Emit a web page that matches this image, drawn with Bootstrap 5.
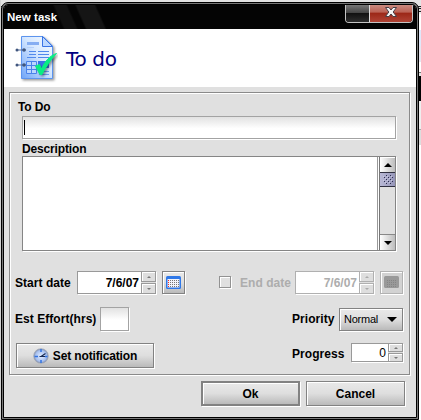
<!DOCTYPE html>
<html lang="en">
<head>
<meta charset="utf-8">
<meta name="viewport" content="width=device-width, initial-scale=1">
<title>New task</title>
<link href="https://cdn.jsdelivr.net/npm/bootstrap@5.3.0/dist/css/bootstrap.min.css" rel="stylesheet">
<style>
html,body{height:420px;overflow:hidden}
body{background:linear-gradient(90deg,#d2d2d2 0 1px,transparent 1px),linear-gradient(#e4e4e4 0 6px,#222 6px 7px,#ddd 7px 8px,#222 8px 9px,#ddd 9px 11px,#222 11px 12px,#eee 12px 14px,#fff 14px 30px,#dfe8fa 30px 46px,#e6e6f0 46px 62px,#fff 62px 72px,#777 72px 73px,#e4e4e4 73px 76px,#000 76px 101px,#eee 101px 129px,#aaa 129px 130px,#ddd 130px 145px,#fff 145px);font:bold 12px/14px "Liberation Sans",Arial,sans-serif;letter-spacing:-.15px;color:#000;padding:2px 2px 0 1px}
.win{height:418px;border:1px solid #000;border-radius:7px 7px 0 0;background:#777;padding:1px}
.win-in{height:414px;border:1px solid #000;border-radius:5px 5px 0 0;background:#e0e0e0;overflow:hidden}
.titlebar{height:24px;background:linear-gradient(66deg,transparent 0 54px,#111 56px 66px,transparent 68px 74px,#151515 76px 92px,transparent 94px) 0 0/100% 100%,#040404;color:#fff;padding-left:3px;padding-top:5px;font-size:11.5px;letter-spacing:.05px}
.caps{width:68px;height:20px;margin:-7px 3px 0 0;border:1px solid #c4c4c4;border-top:0;border-radius:0 0 4px 4px;overflow:hidden;padding-top:2px}
.caps-a{width:24px;background:linear-gradient(#777,#464646 45%,#111 50%,#2d2d2d);border-right:1px solid #ddd}
.caps-b{background:linear-gradient(#cb8b80,#bb6154 42%,#9c2717 48%,#b04335)}
.head{height:58px;background:#fff;padding:6px 0 0 9px}
.head h1{font:20px/24px "DejaVu Sans",sans-serif;color:#000080;letter-spacing:-.35px;margin:12px 0 0 8px}
.group{margin:5px 6px 0 5px;height:283px;border:1px solid #8a8a8a;box-shadow:inset 1px 1px #fff,1px 1px #fff;padding:7px 0 0 5px}
.fld{background:#fff;border:1px solid #a3a3a3;box-shadow:1px 1px #fff}
.soft{background:linear-gradient(#e2e2e2,#fff 55%)}
.lbl{height:14px;white-space:nowrap}
.frow .lbl{letter-spacing:.05px}
.l-todo{padding-left:3px}
.l-desc{padding-left:7px;margin-top:3px}
.todo{height:23px;margin:2px 0 0 7px;width:374px;padding:3px 0 0 1px}
.caret{width:1px;height:15px;background:#000}
.desc{height:95px;width:374px;margin-left:7px;border:1px solid #858585;box-shadow:1px 1px #fff;}
.sb{width:16px;border-left:1px solid #777;box-shadow:-1px 0 #fff,-2px 0 #999;background:#e0e0e0}
.sbb{height:15px;background:linear-gradient(90deg,#fff,#bdbdbd);border-top:1px solid #fff}
.sbb.dn{height:16px;border-top-color:#888}
.thumb{height:15px;border:1px solid #303040;border-width:1px 0;background:linear-gradient(90deg,#b9b9d6,#9595b8)}
.frow{width:388px}
.r1{margin-top:20px;height:23px}
.r2{margin-top:13px;height:24px}
.r3{margin-top:12px;height:25px}
.w-start{width:62px}
.w-end{width:55px}
.w-est{width:85px}
.spin{height:23px;width:79px;box-shadow:1px 1px #fff}
.spin .val{border:1px solid #999;border-right:0;background:#fff;text-align:right;flex:1;padding:4px 2px 0 0;letter-spacing:0}
.arrows{width:15px;display:grid;grid-template-rows:1fr 1fr;gap:1px}
.arrows span{border:1px solid #999;box-shadow:inset 1px 1px #fff;background:#dedede;display:flex;align-items:center;justify-content:center}
.arrows path{fill:#777}
.dis{color:#adadad}
.dis .val,.dis .arrows span{border-color:#b0b0b0}
.dis .arrows path{fill:#aaa}
.jbtn{border:1px solid #828282;box-shadow:inset 1px 1px #fff,1px 1px #fff;background:linear-gradient(#e9e9e9,#dedede 50%,#bababa);border-radius:0;padding:0;color:#000;font:inherit;letter-spacing:inherit;display:flex;align-items:center;justify-content:center}
.jbtn:disabled{opacity:1}
.sq{width:23px;height:23px;margin-left:6px}
.sq.off{border-color:#b2b2b2;background:#d2d2d2}
.chk{width:12px;height:12px;border:1px solid #929292;box-shadow:1px 1px #fff,inset 1px 1px #fff;margin:0 9px 0 34px;position:relative;top:-1px}
.est{width:29px;height:24px}
.combo{width:64px;height:23px;font-weight:normal;font-size:11px;letter-spacing:-.25px;justify-content:space-between;padding:0 5px 0 4px}
.notif{width:138px;height:25px;margin-left:1px}
.spin.prog{width:52px;height:19px;margin-left:2px}
.prog .val{font-weight:normal;padding:2px 2px 0 0}
.w-prog{width:57px}
.w-prio{width:47px}
.acts{margin:6px 11px 0 0;gap:6px}
.act{width:99px;height:25px;letter-spacing:0}
.okb{border-width:2px}
svg{display:block}
</style>
</head>
<body>
<main class="win"><div class="win-in">
  <header class="titlebar d-flex justify-content-between"><span>New task</span>
    <div class="caps d-flex"><span class="caps-a"></span><span class="caps-b flex-fill d-flex justify-content-center">
      <svg width="14" height="16" viewBox="0 0 14 16"><path d="M1.500 2.500h3.500L7 5l2-2.500h3.500L9.200 7l3.300 4.500H9L7 9l-2 2.500H1.500L4.800 7z" fill="#f5f5f5" stroke="#493d43"/></svg></span></div>
  </header>
  <section class="head d-flex">
    <svg width="45" height="48" viewBox="0 0 45 48">
      <defs><linearGradient id="pg" x1="1" y1="0" x2="0" y2="1"><stop stop-color="#f8fcff"/><stop offset=".45" stop-color="#d6e8ff"/><stop offset="1" stop-color="#6ea4f8"/></linearGradient>
      <filter id="sh" x="-20%" y="-20%" width="150%" height="150%" color-interpolation-filters="sRGB"><feDropShadow dx="1.5" dy="1.5" stdDeviation="1" flood-opacity=".4"/></filter></defs>
      <path d="M8.500 1.500H30L39.500 11V43.500H8.500z" fill="url(#pg)" stroke="#5c94ee" filter="url(#sh)"/>
      <path d="M29.500 1.500V11.500H39.500z" fill="#bcd8ff" stroke="#3974e5"/>
      <path d="M14 8.500h12" stroke="#86aef2" stroke-width="3"/><path d="M14 12.500h7" stroke="#b5d0fa"/>
      <path d="M16 16.500h7M16 19.500h7M14 22.500h9M25 16.500h11M25 19.500h11M25 22.500h11" stroke="#5189ec"/>
      <path d="M13.500 26.500h10v12h-10zM13.500 30.500h10M13.500 34.500h10M18.500 26.500v12" fill="#bad6ff" stroke="#4a82ea"/>
      <path d="M25 26h11v7H25z" fill="#3974e5"/><path d="M26 36.500h10M26 39.500h10" stroke="#6a9af0"/>
      <path d="M3 15H13M3 30H13" stroke="#566e9a"/><g fill="#40567e"><circle cx="4" cy="15" r="1.500"/><circle cx="11" cy="15" r="1.800"/><circle cx="4" cy="30" r="1.500"/><circle cx="11" cy="30" r="1.800"/></g>
      <path d="M22.500 31l4-1.500 2 4.500C32 26 37 20.500 43.500 18.500 37.500 25 33 31.500 29 39.500h-2z" fill="#09ed83" stroke="#09ed83" stroke-width="1" filter="url(#sh)"/>
    </svg>
    <h1>To do</h1>
  </section>
  <section class="group">
    <div class="lbl l-todo">To Do</div>
    <div class="fld soft todo"><div class="caret"></div></div>
    <div class="lbl l-desc">Description</div>
    <div class="desc bg-white d-flex justify-content-end">
      <div class="sb d-flex flex-column">
        <div class="sbb d-flex align-items-center justify-content-center"><svg width="8" height="4"><path d="M0 4l4-4 4 4z"/></svg></div>
        <div class="thumb"><svg width="15" height="13"><defs><pattern id="dots" width="4" height="4" patternUnits="userSpaceOnUse"><path d="M0 0h1v1H0zM2 2h1v1H2z" fill="#2d2d50"/><path d="M1 1h1v1H1zM3 3h1v1H3z" fill="#c8c8e0"/></pattern></defs><path d="M3 2h10v9H3z" fill="url(#dots)"/></svg></div><div class="flex-fill"></div>
        <div class="sbb dn d-flex align-items-center justify-content-center"><svg width="8" height="4"><path d="M0 0h8L4 4z"/></svg></div>
      </div>
    </div>
    <div class="frow r1 d-flex align-items-center">
      <span class="lbl w-start">Start date</span>
      <div class="spin d-flex"><div class="val">7/6/07</div><div class="arrows"><span><svg width="4" height="2"><path d="M0 2l2-2 2 2z"/></svg></span><span><svg width="4" height="2"><path d="M0 0h4L2 2z"/></svg></span></div></div>
      <button class="jbtn sq" aria-label="Pick start date"><svg width="15" height="13" viewBox="0 0 15 13"><rect width="15" height="13" rx="1.500" fill="#2f78e8"/><path d="M1.500 3h12v8.500h-12z" fill="#f2f4fa"/><path d="M2.500 4v7" stroke="#f02c2c" stroke-dasharray="1 1"/><path d="M4.500 4v7M6.500 4v7M8.500 4v7M10.500 4v7M12.500 4v7" stroke="#777" stroke-dasharray="1 1"/></svg></button>
      <span class="chk"></span><span class="lbl w-end dis">End date</span>
      <div class="spin dis d-flex"><div class="val">7/6/07</div><div class="arrows"><span><svg width="4" height="2"><path d="M0 2l2-2 2 2z"/></svg></span><span><svg width="4" height="2"><path d="M0 0h4L2 2z"/></svg></span></div></div>
      <button class="jbtn sq off" disabled aria-label="Pick end date"><svg width="15" height="13"><rect width="15" height="12" rx="1.500" fill="#999"/><path d="M3.500 4v7M5.500 4v7M7.500 4v7M9.500 4v7M11.500 4v7" stroke="#858585" stroke-dasharray="1 1"/></svg></button>
    </div>
    <div class="frow r2 d-flex align-items-center">
      <span class="lbl w-est">Est Effort(hrs)</span><div class="fld soft est"></div>
      <span class="lbl ms-auto w-prio">Priority</span>
      <button class="jbtn combo">Normal<svg width="10" height="5"><path d="M0 0h10L5 5z"/></svg></button>
    </div>
    <div class="frow r3 d-flex align-items-start">
      <button class="jbtn notif"><svg class="me-1" width="16" height="16" viewBox="0 0 16 16"><defs><radialGradient id="clk"><stop offset=".1" stop-color="#dce9ff"/><stop offset=".75" stop-color="#a8c0ee"/><stop offset="1" stop-color="#7c8aa8"/></radialGradient></defs><circle cx="8" cy="8" r="7.300" fill="url(#clk)" stroke="#a2aab8" stroke-width=".8"/><path d="M8 1v3M8 12v3M1.500 8.500H5M12 8.500h2.500" stroke="#3173e2" stroke-width="1.500"/><path d="M12.500 5.500L8 8.500M6.500 8.500H12" fill="none" stroke="#172952" stroke-width="1.200"/></svg>Set notification</button>
      <span class="lbl ms-auto w-prog mt-1">Progress</span>
      <div class="spin prog d-flex"><div class="val">0</div><div class="arrows"><span><svg width="4" height="2"><path d="M0 2l2-2 2 2z"/></svg></span><span><svg width="4" height="2"><path d="M0 0h4L2 2z"/></svg></span></div></div>
    </div>
  </section>
  <footer class="acts d-flex justify-content-end"><button class="jbtn act okb">Ok</button><button class="jbtn act">Cancel</button></footer>
</div></main>
</body>
</html>
